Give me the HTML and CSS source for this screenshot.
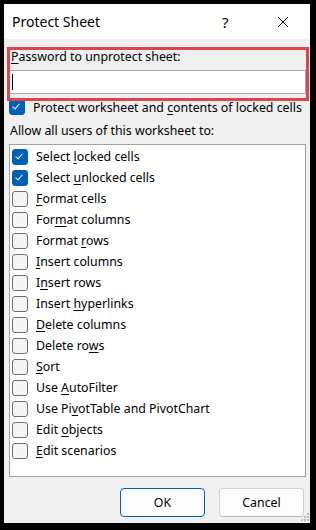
FILE: index.html
```html
<!DOCTYPE html>
<html>
<head>
<meta charset="utf-8">
<link rel="stylesheet" href="styles.css">
</head>
<body>
<div class="window">
  <div class="titlebar">
    <span class="title">Protect Sheet</span>
    <span class="help">?</span>
    <svg class="close" width="12" height="12" viewBox="0 0 12 12"><path d="M1 1 L11 11 M11 1 L1 11" stroke="#000" stroke-width="1" fill="none"/></svg>
  </div>
  <div class="content">
    <div class="label"><u>P</u>assword to unprotect sheet:</div>
    <div class="input"><span class="caret"></span></div>
    <div class="row protect"><span class="cb on"></span><span><span class="t">Protect worksheet and <u>c</u>ontents of locked cells</span></span></div>
    <div class="label allow">Allow all users of this worksheet to:</div>
    <div class="list">
      <div class="row"><span class="cb on"></span><span>Select <u>l</u>ocked cells</span></div>
      <div class="row"><span class="cb on"></span><span>Select <u>u</u>nlocked cells</span></div>
      <div class="row"><span class="cb"></span><span><u>F</u>ormat cells</span></div>
      <div class="row"><span class="cb"></span><span>For<u>m</u>at columns</span></div>
      <div class="row"><span class="cb"></span><span>Format <u>r</u>ows</span></div>
      <div class="row"><span class="cb"></span><span><u>I</u>nsert columns</span></div>
      <div class="row"><span class="cb"></span><span>I<u>n</u>sert rows</span></div>
      <div class="row"><span class="cb"></span><span>Insert <u>h</u>yperlinks</span></div>
      <div class="row"><span class="cb"></span><span><u>D</u>elete columns</span></div>
      <div class="row"><span class="cb"></span><span>Delete ro<u>w</u>s</span></div>
      <div class="row"><span class="cb"></span><span><u>S</u>ort</span></div>
      <div class="row"><span class="cb"></span><span>Use <u>A</u>utoFilter</span></div>
      <div class="row"><span class="cb"></span><span>Use Pi<u>v</u>otTable and PivotChart</span></div>
      <div class="row"><span class="cb"></span><span>Edit <u>o</u>bjects</span></div>
      <div class="row"><span class="cb"></span><span><u>E</u>dit scenarios</span></div>
    </div>
    <div class="buttons">
      <button class="btn default">OK</button>
      <button class="btn">Cancel</button>
    </div>
  </div>
  <div class="highlight"></div>
  <div class="grip">
    <i style="grid-area:1/3"></i>
    <i style="grid-area:2/2"></i><i style="grid-area:2/3"></i>
    <i style="grid-area:3/1"></i><i style="grid-area:3/2"></i><i style="grid-area:3/3"></i>
  </div>
</div>
</body>
</html>
```
FILE: styles.css
```css
html, body {
  margin: 0;
  padding: 0;
}
body {
  background: #000;
  width: 316px;
  height: 530px;
  overflow: hidden;
  font-family: "Noto Sans", "DejaVu Sans", sans-serif;
  font-size: 12.35px;
  color: #000;
}
u {
  text-underline-offset: 2px;
  text-decoration-thickness: 1px;
}
.window {
  position: relative;
  margin: 4px 0 0 4px;
  width: 306px;
  height: 519px;
  background: #f0f0f0;
  display: flex;
  flex-direction: column;
}
.titlebar {
  height: 35px;
  background: #fff;
  display: flex;
  align-items: center;
  padding-left: 8px;
  flex: none;
}
.title {
  font-size: 14px;
  width: 210px;
}
.help {
  font-size: 15px;
  width: 55px;
}
.close {
  display: block;
}
.content {
  padding: 0 4px 0 5px;
  display: flex;
  flex-direction: column;
}
.label {
  margin-top: 10px;
  line-height: 16px;
  padding-left: 2px;
}
.input {
  margin-top: 5px;
  height: 22px;
  border: 1px solid #a6a6a6;
  background: #fff;
  display: flex;
  align-items: center;
  padding-left: 2px;
}
.caret {
  width: 1px;
  height: 16px;
  background: #000;
}
.row {
  display: flex;
  align-items: center;
  gap: 8px;
  height: 21px;
  white-space: nowrap;
}
.protect {
  margin-top: 2px;
  height: 22px;
  padding-left: 0;
}
.label.allow {
  margin-top: 5px;
  padding-left: 1px;
}
.list {
  margin-top: 5px;
  height: 330px;
  border: 1px solid #a0a0a0;
  background: #fff;
  padding: 1px 0 0 2px;
}
.cb {
  width: 14px;
  height: 14px;
  border: 1px solid #6f6f6f;
  border-radius: 3px;
  background: #f5f5f5;
  flex: none;
  position: relative;
}
.cb.on {
  background: #005fb8;
  border-color: #005fb8;
}
.cb.on::after {
  content: "";
  position: absolute;
  left: 4px;
  top: 2px;
  width: 3px;
  height: 6px;
  border: solid #fff;
  border-width: 0 1px 1px 0;
  transform: rotate(40deg);
}
.buttons {
  margin-top: 11px;
  display: flex;
  justify-content: flex-end;
  gap: 14px;
  padding-right: 2px;
}
.btn {
  width: 85px;
  height: 29px;
  font-family: inherit;
  font-size: 12.35px;
  background: #fdfdfd;
  border: 1px solid #d0d0d0;
  border-bottom-color: #b8b8b8;
  border-radius: 4px;
  color: #000;
  padding: 0;
}
.btn.default {
  border: 1px solid #005fb8;
}
.highlight {
  position: absolute;
  left: 3px;
  top: 43px;
  width: 296px;
  height: 48px;
  border: 3px solid #e0434a;
}
.grip {
  position: absolute;
  right: 1px;
  bottom: 2px;
  display: grid;
  grid-template-columns: repeat(3, 2px);
  grid-template-rows: repeat(3, 2px);
  gap: 1px;
}
.grip i {
  display: block;
  background: #bdbdbd;
}
```
